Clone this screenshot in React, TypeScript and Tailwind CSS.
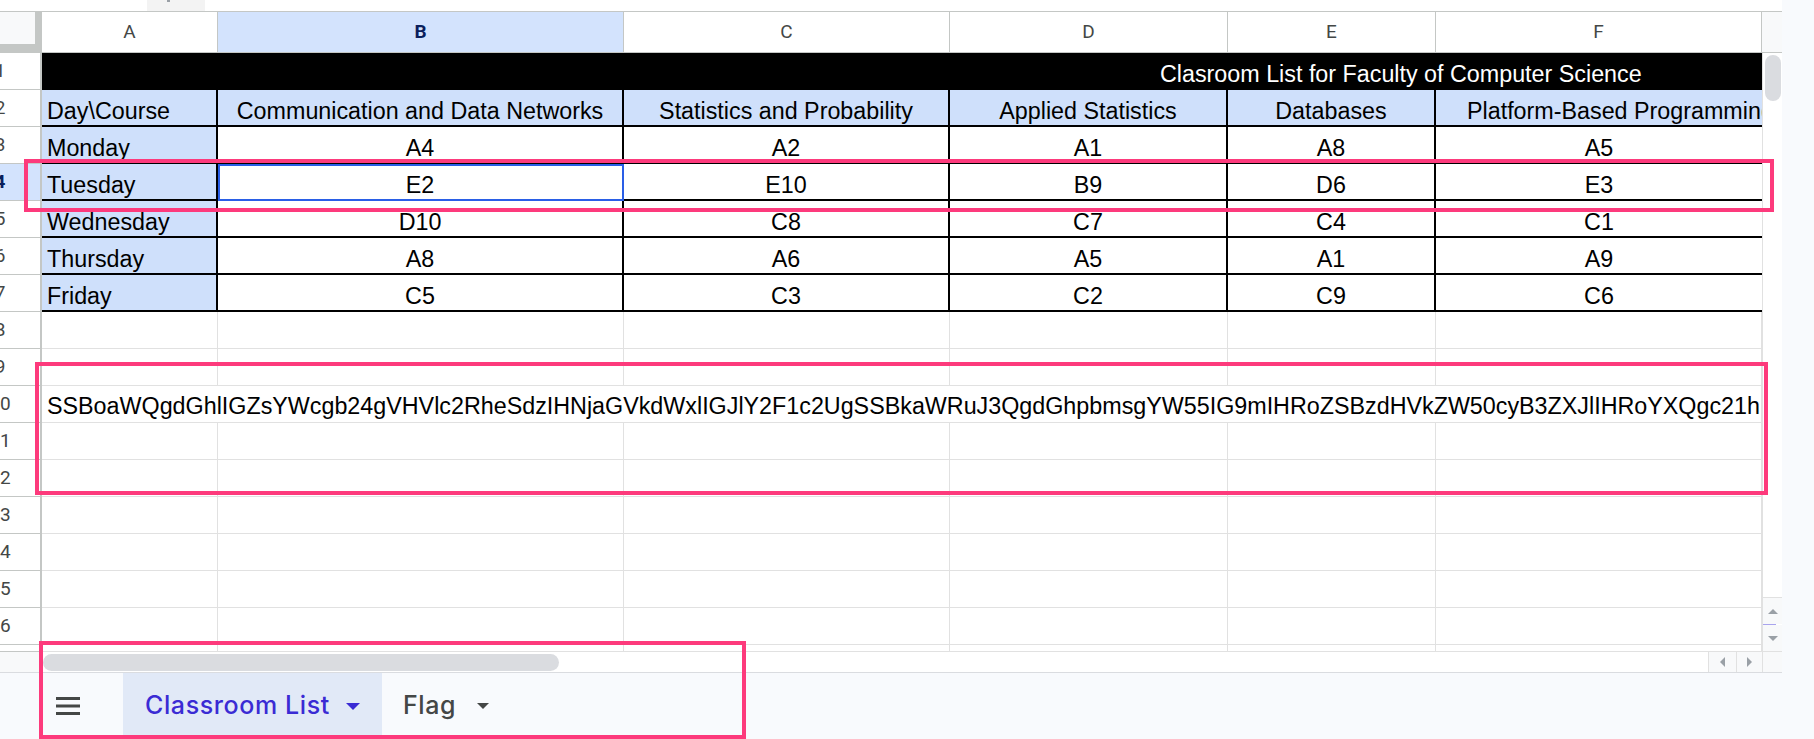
import React from "react";
import clsx from "clsx";

const COL_W = ["w-[176px]", "w-[406px]", "w-[326px]", "w-[278px]", "w-[208px]", "w-[326px]"];
const LETTERS = ["A", "B", "C", "D", "E", "F"];

const courses = [
  "Day\\Course",
  "Communication and Data Networks",
  "Statistics and Probability",
  "Applied Statistics",
  "Databases",
  "Platform-Based Programming",
];

const schedule = [
  ["Monday", "A4", "A2", "A1", "A8", "A5"],
  ["Tuesday", "E2", "E10", "B9", "D6", "E3"],
  ["Wednesday", "D10", "C8", "C7", "C4", "C1"],
  ["Thursday", "A8", "A6", "A5", "A1", "A9"],
  ["Friday", "C5", "C3", "C2", "C9", "C6"],
];

const FLAG_TEXT =
  "SSBoaWQgdGhlIGZsYWcgb24gVHVlc2RheSdzIHNjaGVkdWxlIGJlY2F1c2UgSSBkaWRuJ3QgdGhpbmsgYW55IG9mIHRoZSBzdHVkZW50cyB3ZXJlIHRoYXQgc21h";

const CELL_FONT = "font-['Liberation_Sans',Arial,sans-serif] text-[23.3px] leading-[27px] text-black";
const HEAD_FONT = "font-['Roboto',Arial,sans-serif] text-[19px]";

const RowHead = ({ n, active, short }: { n: number; active?: boolean; short?: boolean }) => (
  <div
    className={clsx(
      "w-[42px] shrink-0 h-full overflow-hidden flex items-center border-r-2 border-b border-[#c4c7c5]",
      HEAD_FONT,
      active ? "bg-[#d3e3fd] text-[#0b1f5c] font-bold" : "bg-white text-[#444746]"
    )}
  >
    {!short && <span className="w-[80px] shrink-0 -ml-[40px] text-center">{n}</span>}
  </div>
);

const EmptyRow = ({ n, short }: { n: number; short?: boolean }) => (
  <div className={clsx("flex shrink-0", short ? "h-[7px]" : "h-[37px]")}>
    <RowHead n={n} short={short} />
    {COL_W.map((w, i) => (
      <div key={i} className={clsx(w, "shrink-0 h-full border-r border-b border-[#e1e1e1]")} />
    ))}
  </div>
);

const DataRow = ({
  n,
  cells,
  header,
  selectedCol,
}: {
  n: number;
  cells: string[];
  header?: boolean;
  selectedCol?: number;
}) => (
  <div className="flex shrink-0 h-[37px]">
    <RowHead n={n} active={selectedCol !== undefined} />
    {cells.map((c, i) => (
      <div
        key={i}
        className={clsx(
          COL_W[i],
          CELL_FONT,
          "shrink-0 h-full flex items-end overflow-hidden whitespace-nowrap border-b-2 border-black",
          i < 5 && "border-r-2",
          header || i === 0 ? "bg-[#cfe0fb]" : "bg-white",
          i === 0 ? "pl-[5px]" : header && i === 5 ? "pl-[31px]" : "justify-center",
          selectedCol === i && "outline-2 outline-[#2a5ee6] -outline-offset-2"
        )}
      >
        {c}
      </div>
    ))}
  </div>
);

const Triangle = ({ className }: { className: string }) => (
  <svg width="14" height="7" viewBox="0 0 14 7" className={className}>
    <polygon points="0,0 14,0 7,7" fill="currentColor" />
  </svg>
);

export default function App() {
  return (
    <div className="relative w-[1814px] h-[739px] flex overflow-hidden bg-white">
      <div className="w-[1782px] shrink-0 flex flex-col">
        {/* bit of the toolbar above the grid */}
        <div className="h-[12px] shrink-0 border-b border-[#c4c7c5] flex">
          <div className="ml-[147px] w-[58px] h-full bg-[#f3f3f3] flex">
            <div className="ml-[20px] w-[3px] h-[2px] bg-[#9aa0a6]" />
          </div>
        </div>

        {/* column headers */}
        <div className={clsx("h-[41px] shrink-0 flex border-b border-[#c4c7c5] text-[#444746]", HEAD_FONT)}>
          <div className="w-[42px] shrink-0 h-full bg-[#f8f9fa] border-r-[7px] border-b-[8px] border-[#c4c7c5]" />
          {LETTERS.map((l, i) => (
            <div
              key={l}
              className={clsx(
                COL_W[i],
                "shrink-0 h-full flex items-center justify-center border-r border-[#c4c7c5]",
                l === "B" ? "bg-[#d3e3fd] text-[#0b1f5c] font-bold" : "bg-white"
              )}
            >
              {l}
            </div>
          ))}
          <div className="w-[20px] shrink-0 h-full bg-[#f8f9fa]" />
        </div>

        {/* grid body */}
        <div className="h-[599px] shrink-0 flex overflow-hidden">
          <div className="w-[1762px] shrink-0 flex flex-col">
            <div className="flex shrink-0 h-[37px]">
              <RowHead n={1} />
              <div className={clsx("w-[1720px] shrink-0 h-full bg-black flex items-end pb-[2px] pl-[1118px] whitespace-nowrap", CELL_FONT, "text-white")}>
                Clasroom List for Faculty of Computer Science
              </div>
            </div>
            <DataRow n={2} cells={courses} header />
            {schedule.map((r, i) => (
              <DataRow key={r[0]} n={i + 3} cells={r} selectedCol={i === 1 ? 1 : undefined} />
            ))}
            <EmptyRow n={8} />
            <EmptyRow n={9} />
            <div className="flex shrink-0 h-[37px]">
              <RowHead n={10} />
              <div className={clsx("w-[1720px] shrink-0 h-full flex items-end pb-[2px] pl-[5px] overflow-hidden whitespace-nowrap border-r border-b border-[#e1e1e1]", CELL_FONT)}>
                {FLAG_TEXT}
              </div>
            </div>
            {[11, 12, 13, 14, 15, 16].map((n) => (
              <EmptyRow key={n} n={n} />
            ))}
            <EmptyRow n={17} short />
          </div>

          {/* vertical scrollbar */}
          <div className="w-[20px] shrink-0 h-full flex flex-col border-l border-[#e1e1e1]">
            <div className="flex-1 bg-white">
              <div className="mt-[2px] ml-[2px] w-[16px] h-[46px] rounded-full bg-[#dadce0]" />
            </div>
            <div className="h-[27px] shrink-0 bg-[#f8f9fa] border-t border-[#e1e1e1] flex items-center justify-center">
              <Triangle className="text-[#9aa0a6] rotate-180 w-[10px] h-[5px]" />
            </div>
            <div className="h-px w-[13px] bg-[#a9a4ee]" />
            <div className="h-[27px] shrink-0 bg-[#f8f9fa] border-b border-[#e1e1e1] flex items-center justify-center">
              <Triangle className="text-[#9aa0a6] w-[10px] h-[5px]" />
            </div>
          </div>
        </div>

        {/* horizontal scrollbar */}
        <div className="h-[21px] shrink-0 flex border-b border-[#dadce0]">
          <div className="w-[42px] shrink-0 h-full bg-[#f8f9fa]" />
          <div className="flex-1 h-full bg-white">
            <div className="ml-[1px] mt-[2px] w-[516px] h-[17px] rounded-full bg-[#dadce0]" />
          </div>
          <div className="w-[28px] shrink-0 h-full bg-[#f8f9fa] border-l border-[#e1e1e1] flex items-center justify-center">
            <svg width="5" height="10" viewBox="0 0 5 10">
              <polygon points="5,0 5,10 0,5" fill="#9aa0a6" />
            </svg>
          </div>
          <div className="w-[26px] shrink-0 h-full bg-[#f8f9fa] border-l border-[#e1e1e1] flex items-center justify-center">
            <svg width="5" height="10" viewBox="0 0 5 10">
              <polygon points="0,0 0,10 5,5" fill="#9aa0a6" />
            </svg>
          </div>
          <div className="w-[20px] shrink-0 h-full bg-[#f8f9fa] border-l border-[#e1e1e1]" />
        </div>

        {/* sheet tabs */}
        <div className="h-[66px] shrink-0 flex bg-[#f8fafd] font-['Inter',sans-serif] text-[25px] font-medium tracking-[0.6px]">
          <div className="w-[123px] shrink-0 flex items-center pl-[56px]">
            <svg width="24" height="18" viewBox="0 0 24 18">
              <rect x="0" y="0" width="24" height="3" fill="#444746" />
              <rect x="0" y="7.5" width="24" height="3" fill="#444746" />
              <rect x="0" y="15" width="24" height="3" fill="#444746" />
            </svg>
          </div>
          <div className="w-[259px] shrink-0 flex items-center pl-[22px] gap-[16px] bg-[#e1e9f7] text-[#3a2bd4]">
            <span>Classroom List</span>
            <Triangle className="text-[#3a2bd4]" />
          </div>
          <div className="flex items-center pl-[21px] gap-[21px] text-[#444746]">
            <span>Flag</span>
            <Triangle className="text-[#444746] w-[12px] h-[6px]" />
          </div>
        </div>
      </div>

      <div className="w-[32px] shrink-0 h-full bg-[#f8fafd]" />

      {/* highlight boxes */}
      <div className="absolute left-[24px] top-[159px] w-[1750px] h-[53px] border-4 border-[#fd3a7c]" />
      <div className="absolute left-[35px] top-[362px] w-[1733px] h-[133px] border-4 border-[#fd3a7c]" />
      <div className="absolute left-[39px] top-[641px] w-[707px] h-[98px] border-4 border-[#fd3a7c]" />
    </div>
  );
}
